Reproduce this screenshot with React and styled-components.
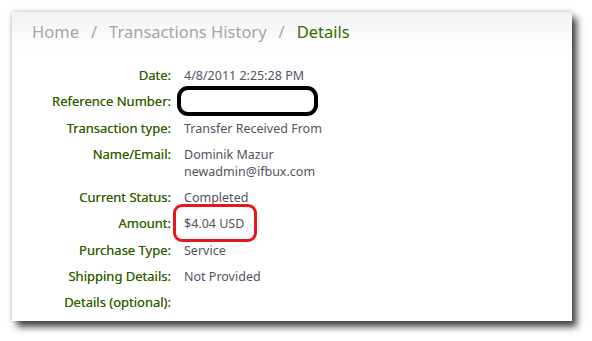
import styled, { createGlobalStyle } from 'styled-components';

const Global = createGlobalStyle`
  html, body {
    margin: 0;
    background: #ffffff;
    font-family: "Noto Sans", "DejaVu Sans", sans-serif;
  }
`;

const Page = styled.div`
  box-sizing: border-box;
  width: 592px;
  height: 341px;
  padding: 12px 0 0 12px;
  background: #ffffff;
`;

// Carta principal com sombra
const Card = styled.div`
  width: 560px;
  height: 309px;
  background: #ffffff;
  box-shadow: 0 0 5px rgba(0, 0, 0, 0.25), 5px 6px 7px rgba(0, 0, 0, 0.7);
  display: flex;
  flex-direction: column;
`;

const Header = styled.div`
  height: 39px;
  display: flex;
  align-items: center;
  gap: 11px;
  padding-left: 20px;
  background: linear-gradient(#f3f3f3, #ffffff);
  font-size: 16.5px;
  color: #a6a6a6;
`;

const Crumb = styled.span`
  color: ${(p) => (p.active ? '#2f7000' : '#a6a6a6')};
`;

const Sep = styled.span`
  color: #a6a6a6;
  padding: 0 1px;
`;

const Rows = styled.div`
  display: grid;
  grid-template-columns: 159px 1fr;
  column-gap: 13px;
  row-gap: 9.3px;
  padding-top: 16px;
  font-size: 12.5px;
  line-height: 17px;
`;

const Label = styled.div`
  text-align: right;
  font-size: 13px;
  color: #2f6000;
  text-shadow: 0 0 0.5px rgba(60, 100, 0, 0.8);
`;

const Value = styled.div`
  color: #54525f;
`;

const Mark = styled.span`
  display: inline-block;
  box-sizing: border-box;
  border: ${(p) => (p.red ? '3px solid #e8141e' : '4px solid #000000')};
  border-radius: ${(p) => (p.red ? '9px' : '11px')};
  width: ${(p) => p.w}px;
  height: ${(p) => p.h}px;
  margin: ${(p) => (p.red ? '-11px 0 -10px -11px' : '-7px 0 -6px -7px')};
  padding: ${(p) => (p.red ? '8px 0 0 8px' : '0')};
  vertical-align: top;
`;

const rows = [
  ['Date:', '4/8/2011 2:25:28 PM'],
  ['Reference Number:', 'ref'],
  ['Transaction type:', 'Transfer Received From'],
  ['Name/Email:', 'Dominik Mazur\nnewadmin@ifbux.com'],
  ['Current Status:', 'Completed'],
  ['Amount:', 'amount'],
  ['Purchase Type:', 'Service'],
  ['Shipping Details:', 'Not Provided'],
  ['Details (optional):', ''],
];

const renderValue = (v) => {
  if (v === 'ref') return <Mark w={141} h={30} />;
  if (v === 'amount')
    return (
      <Mark red w={84} h={38}>
        $4.04 USD
      </Mark>
    );
  return v.split('\n').map((line) => <div key={line}>{line}</div>);
};

const App = () => {
  return (
    <Page>
      <Global />
      <Card>
        <Header>
          <Crumb>Home</Crumb>
          <Sep>/</Sep>
          <Crumb>Transactions History</Crumb>
          <Sep>/</Sep>
          <Crumb active>Details</Crumb>
        </Header>
        <Rows>
          {rows.map(([label, value]) => [
            <Label key={label}>{label}</Label>,
            <Value key={label + 'v'}>{renderValue(value)}</Value>,
          ])}
        </Rows>
      </Card>
    </Page>
  );
};

export default App;
